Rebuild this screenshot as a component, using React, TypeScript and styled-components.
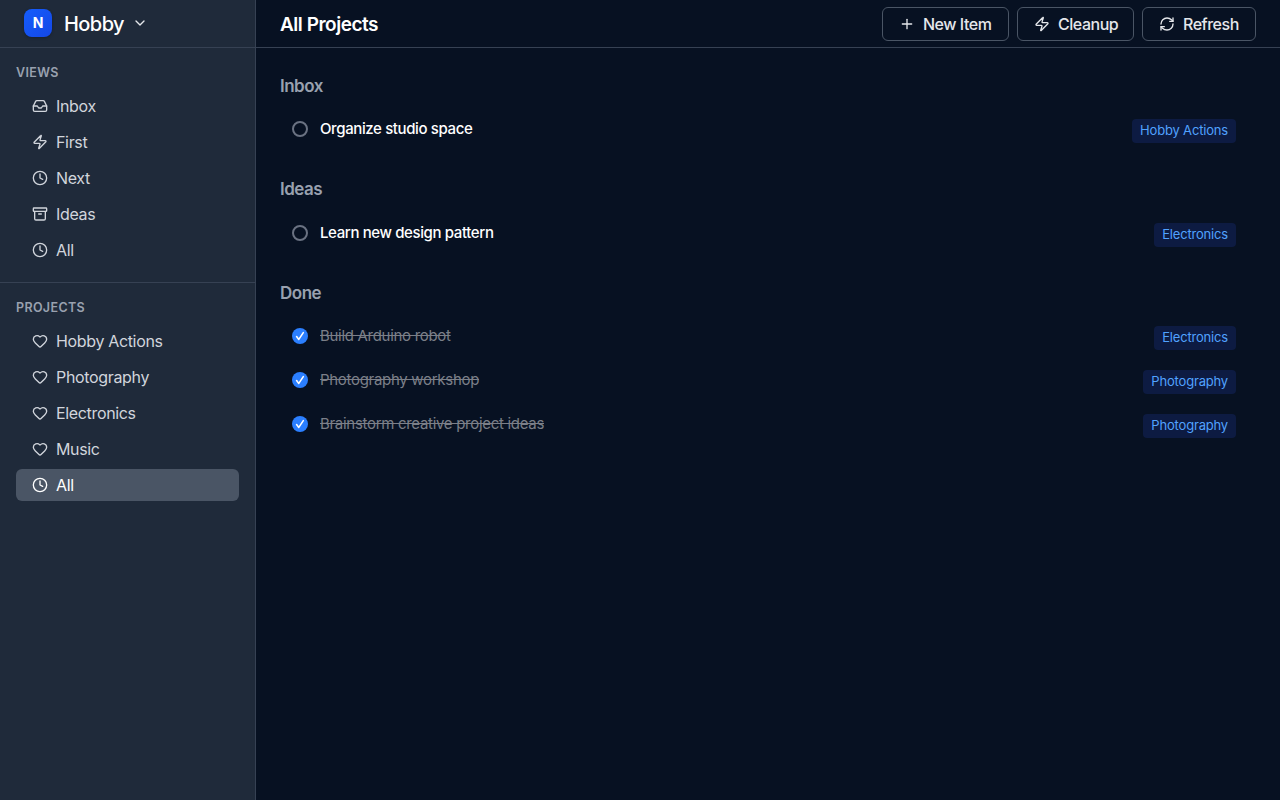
import React from 'react';
import styled, { createGlobalStyle, css } from 'styled-components';
import { Inbox, Zap, Clock, Archive, Heart, RefreshCw, Plus, ChevronDown } from 'lucide-react';

const GlobalStyle = createGlobalStyle`
  *, *::before, *::after { box-sizing: border-box; }
  body {
    margin: 0;
    background: #071122;
    color: #fff;
    font-family: Inter, "Liberation Sans", sans-serif;
    -webkit-font-smoothing: antialiased;
  }
  h1, h2, h3, ul { margin: 0; padding: 0; font-weight: inherit; }
  ul { list-style: none; }
  svg { display: block; flex: none; }
`;

const Shell = styled.div`
  display: flex;
  height: 100vh;
  overflow: hidden;
`;

const Sidebar = styled.aside`
  width: 256px;
  flex: none;
  background: #1f2a3a;
  border-right: 1px solid #364153;
`;

const Brand = styled.div`
  display: flex;
  align-items: center;
  height: 48px;
  padding: 0 24px 2px;
  border-bottom: 1px solid #364153;
`;

const Logo = styled.span`
  display: flex;
  align-items: center;
  justify-content: center;
  width: 28px;
  height: 28px;
  margin-right: 12px;
  border-radius: 8px;
  background: linear-gradient(135deg, #155dfc, #1447e6);
  box-shadow: 0 1px 3px rgba(0, 0, 0, 0.25);
  font-size: 14px;
  font-weight: 700;
`;

const BrandName = styled.span`
  margin: 2px 8px 0 0;
  font-size: 20px;
  line-height: 28px;
  font-weight: 500;
  letter-spacing: -0.55px;
`;

const NavSection = styled.nav<{ $divided?: boolean }>`
  padding: 16px 16px 0;
  ${(p) =>
    p.$divided &&
    css`
      padding-bottom: 16px;
      border-bottom: 1px solid #364153;
    `}
`;

const NavHeading = styled.h3`
  margin-bottom: 9px;
  font-size: 12.5px;
  line-height: 17px;
  font-weight: 600;
  letter-spacing: 0.35px;
  color: #99a1af;
`;

const NavList = styled.ul`
  display: grid;
  gap: 4px;
`;

const NavItem = styled.li<{ $active?: boolean }>`
  display: flex;
  align-items: center;
  gap: 8px;
  height: 32px;
  padding: 0 16px;
  border-radius: 6px;
  font-size: 16px;
  font-weight: 400;
  letter-spacing: -0.34px;
  color: ${(p) => (p.$active ? '#fff' : '#d1d5dc')};
  background: ${(p) => (p.$active ? '#4a5565' : 'transparent')};
`;

const Main = styled.main`
  flex: 1;
  min-width: 0;
`;

const Header = styled.header`
  display: flex;
  align-items: center;
  justify-content: space-between;
  height: 48px;
  padding: 0 24px;
  border-bottom: 1px solid #364153;
`;

const Title = styled.h1`
  padding-top: 2px;
  font-size: 19px;
  font-weight: 600;
  letter-spacing: -0.48px;
`;

const Toolbar = styled.div`
  display: flex;
  gap: 8px;
`;

const ToolButton = styled.button<{ $width: number }>`
  display: flex;
  align-items: center;
  gap: 8px;
  width: ${(p) => p.$width}px;
  height: 34px;
  padding: 0 0 0 16px;
  border: 1px solid #4a5565;
  border-radius: 6px;
  background: transparent;
  color: #e5e7eb;
  font: 500 16px Inter, "Liberation Sans", sans-serif;
  letter-spacing: -0.48px;
  white-space: nowrap;
`;

const Content = styled.div`
  padding: 24px 24px 0;
`;

const Group = styled.section`
  margin-bottom: 23.2px;
`;

const GroupTitle = styled.h2`
  margin-bottom: 8.2px;
  font-size: 17px;
  line-height: 28px;
  font-weight: 600;
  letter-spacing: -0.5px;
  color: #99a1af;
`;

const TaskRow = styled.li`
  display: flex;
  align-items: flex-start;
  height: 44px;
  padding: 10px 20px 0 12px;
`;

const Check = styled.span<{ $done: boolean }>`
  display: flex;
  align-items: center;
  justify-content: center;
  width: 16px;
  height: 16px;
  margin: 3px 12px 0 0;
  border-radius: 50%;
  border: ${(p) => (p.$done ? 'none' : '2px solid #6a7282')};
  background: ${(p) => (p.$done ? '#2b7fff' : 'transparent')};
`;

const TaskName = styled.span<{ $done: boolean }>`
  flex: 1;
  font-size: 15px;
  line-height: 21px;
  font-weight: ${(p) => (p.$done ? 400 : 500)};
  letter-spacing: ${(p) => (p.$done ? '-0.3px' : '-0.38px')};
  color: ${(p) => (p.$done ? '#7b7f88' : '#fff')};
  text-decoration: ${(p) => (p.$done ? 'line-through' : 'none')};
`;

const Tag = styled.span`
  height: 24px;
  margin-top: 1px;
  padding: 0 8px;
  border-radius: 4px;
  background: #0d1b42;
  color: #51a2ff;
  font-size: 13px;
  line-height: 23px;
  font-weight: 400;
  letter-spacing: -0.18px;
`;

const views = [
  { label: 'Inbox', Icon: Inbox },
  { label: 'First', Icon: Zap },
  { label: 'Next', Icon: Clock },
  { label: 'Ideas', Icon: Archive },
  { label: 'All', Icon: Clock },
];

const projects = [
  { label: 'Hobby Actions', Icon: Heart },
  { label: 'Photography', Icon: Heart },
  { label: 'Electronics', Icon: Heart },
  { label: 'Music', Icon: Heart },
  { label: 'All', Icon: Clock, active: true },
];

const actions = [
  { label: 'New Item', Icon: Plus, width: 127 },
  { label: 'Cleanup', Icon: Zap, width: 117 },
  { label: 'Refresh', Icon: RefreshCw, width: 114 },
];

const groups = [
  { title: 'Inbox', done: false, tasks: [['Organize studio space', 'Hobby Actions']] },
  { title: 'Ideas', done: false, tasks: [['Learn new design pattern', 'Electronics']] },
  {
    title: 'Done',
    done: true,
    tasks: [
      ['Build Arduino robot', 'Electronics'],
      ['Photography workshop', 'Photography'],
      ['Brainstorm creative project ideas', 'Photography'],
    ],
  },
];

export default function App() {
  return (
    <>
      <GlobalStyle />
      <Shell>
        <Sidebar>
          <Brand>
            <Logo>N</Logo>
            <BrandName>Hobby</BrandName>
            <ChevronDown size={16} color="#e5e7eb" />
          </Brand>
          <NavSection $divided>
            <NavHeading>VIEWS</NavHeading>
            <NavList>
              {views.map(({ label, Icon }) => (
                <NavItem key={label}>
                  <Icon size={16} />
                  {label}
                </NavItem>
              ))}
            </NavList>
          </NavSection>
          <NavSection>
            <NavHeading>PROJECTS</NavHeading>
            <NavList>
              {projects.map(({ label, Icon, active }) => (
                <NavItem key={label} $active={active}>
                  <Icon size={16} />
                  {label}
                </NavItem>
              ))}
            </NavList>
          </NavSection>
        </Sidebar>
        <Main>
          <Header>
            <Title>All Projects</Title>
            <Toolbar>
              {actions.map(({ label, Icon, width }) => (
                <ToolButton key={label} $width={width}>
                  <Icon size={16} />
                  {label}
                </ToolButton>
              ))}
            </Toolbar>
          </Header>
          <Content>
            {groups.map(({ title, done, tasks }) => (
              <Group key={title}>
                <GroupTitle>{title}</GroupTitle>
                <ul>
                  {tasks.map(([name, project]) => (
                    <TaskRow key={name}>
                      <Check $done={done}>
                        {done && (
                          <svg width="16" height="16" viewBox="0 0 16 16" fill="none">
                            <path d="M4.6 8.6 6.8 11.4 11.3 4.6" stroke="#fff" strokeWidth="1.6" strokeLinecap="round" strokeLinejoin="round" />
                          </svg>
                        )}
                      </Check>
                      <TaskName $done={done}>{name}</TaskName>
                      <Tag>{project}</Tag>
                    </TaskRow>
                  ))}
                </ul>
              </Group>
            ))}
          </Content>
        </Main>
      </Shell>
    </>
  );
}
